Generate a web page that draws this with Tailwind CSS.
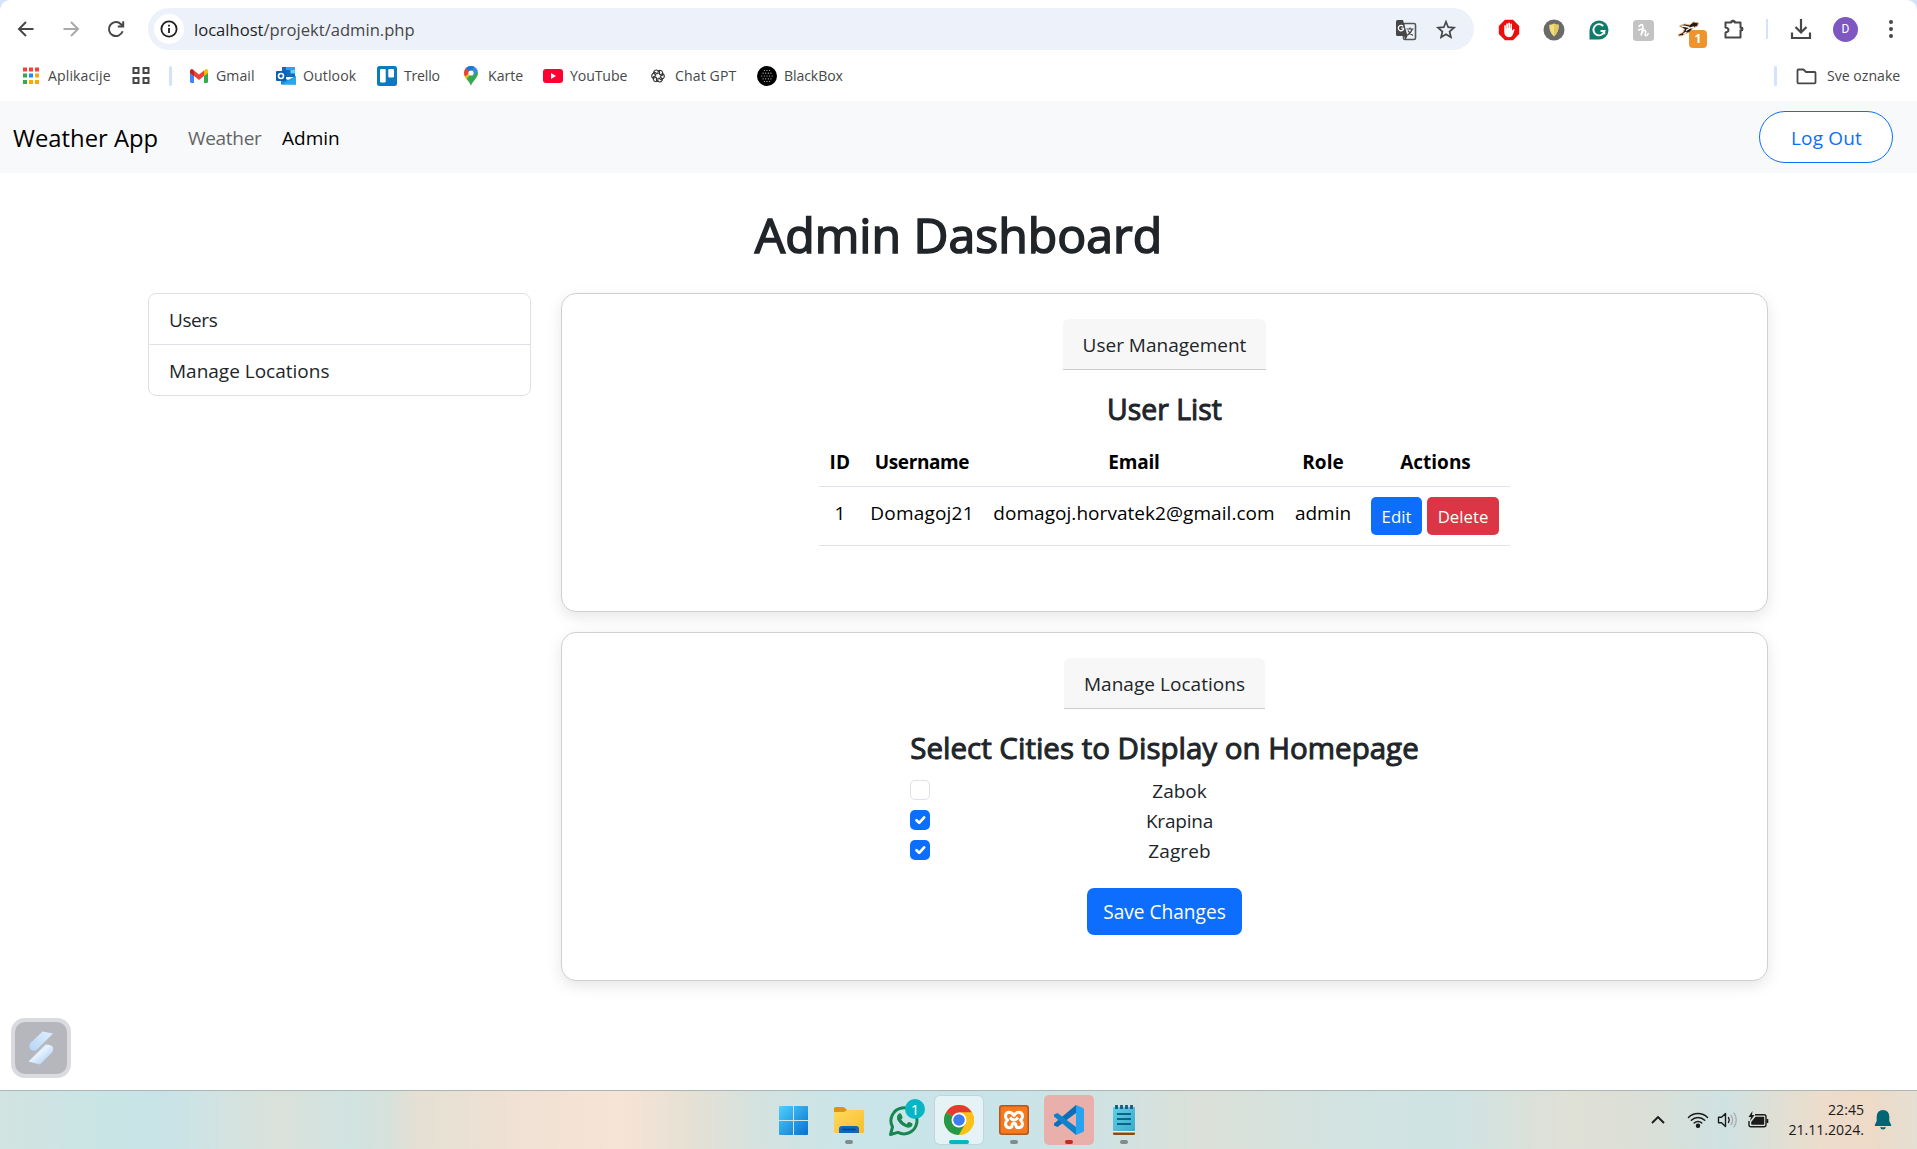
<!DOCTYPE html>
<html lang="hr">
<head>
<meta charset="utf-8">
<title>Admin Dashboard</title>
<script src="https://cdn.jsdelivr.net/npm/@tailwindcss/browser@4"></script>
</head>
<body class="w-[1917px] h-[1149px] overflow-hidden bg-[#d3e3fd] font-['Open_Sans',sans-serif] text-[#212529] flex flex-col">

<!-- Browser chrome -->
<header class="h-[101px] shrink-0 bg-white rounded-t-[10px] flex flex-col">
  <div class="h-[58px] flex items-center">
    <div class="w-[148px] pl-[3px] flex">
      <div class="w-[45px] flex justify-center"><svg class="w-5 h-5" viewBox="0 0 20 20" fill="none" stroke="#474747" stroke-width="2"><path d="M17.5 10H3.5M10 3L3 10l7 7"/></svg></div>
      <div class="w-[45px] flex justify-center"><svg class="w-5 h-5" viewBox="0 0 20 20" fill="none" stroke="#a9a9a9" stroke-width="2"><path d="M2.5 10h14M10 3l7 7-7 7"/></svg></div>
      <div class="w-[45px] flex justify-center"><svg class="w-5 h-5" viewBox="0 0 20 20" fill="none" stroke="#474747" stroke-width="2"><path d="M16.6 12.3A7 7 0 1 1 15 5.2l2 2.2M17.2 2.2v5.3h-5.4"/></svg></div>
    </div>
    <div class="w-[1326px] h-[42px] rounded-full bg-[#ecf1fa] flex items-center pl-[6px]">
      <div class="w-[30px] h-[30px] rounded-full bg-white flex items-center justify-center"><svg class="w-[18px] h-[18px]" viewBox="0 0 18 18" fill="none" stroke="#1f1f1f" stroke-width="1.8"><circle cx="9" cy="9" r="7.6"/><path d="M9 8v5M9 4.8v1.8"/></svg></div>
      <div class="ml-[10px] pt-px text-[16.6px] leading-[24px] text-[#1f1f1f] whitespace-nowrap">localhost<span class="text-[#474747]">/projekt/admin.php</span></div>
      <div class="ml-auto mr-[17px] flex items-center gap-[18px] pt-px">
        <svg class="w-[22px] h-[22px]" viewBox="0 0 22 22"><rect x="8.5" y="4.5" width="12" height="16" rx="1.5" fill="#ecf1fa" stroke="#575757" stroke-width="1.6"/><path d="M1 2.500Q1 1 2.500 1H8l4.500 16H2.500Q1 17 1 15.500z" fill="#474747"/><path d="M12.500 17l-2 4-1.500-4z" fill="#474747"/><path d="M8.800 9.200H6.300M8.700 9.400A2.700 2.700 0 1 1 8 7.200" fill="none" stroke="#fff" stroke-width="1.300"/><path d="M11.500 10h7M15 8.500V10M17.200 10q-1 4-5 6.300M13 11.500q1.500 3 5 5" fill="none" stroke="#474747" stroke-width="1.200"/></svg>
        <svg class="w-[22px] h-[22px]" viewBox="0 0 22 22" fill="none" stroke="#474747" stroke-width="1.700" stroke-linejoin="miter"><path d="M11 2.800l2.200 5.400 5.800.5-4.400 3.800 1.300 5.700L11 15.200l-4.900 3 1.300-5.700L3 8.700l5.800-.5z"/></svg>
      </div>
    </div>
    <div class="ml-3 flex items-center">
      <div class="w-[45px] flex justify-center pt-0.5"><svg class="w-[22px] h-[22px]" viewBox="0 0 22 22"><path d="M7 .8h8L21.200 7v8L15 21.200H7L.8 15V7z" fill="#ec0d0d"/><path d="M6.200 12.500V6.400q.8-.9 1.600 0V9.500h.4V4.700q.8-.9 1.700 0V9.300h.4V3.900q.8-.9 1.700 0v5.400h.4V5q.8-.9 1.600 0v6.800l1-1.400q1.200-.8 1.700.2L15 15.300q-1 2.900-4 2.900-4.800 0-4.800-5.700z" fill="#fff"/></svg></div>
      <div class="w-[45px] flex justify-center pt-0.5"><svg class="w-[22px] h-[22px]" viewBox="0 0 22 22"><circle cx="11" cy="11" r="10.500" fill="#6a6a6a"/><path d="M6.300 5.800q2.700 0 4.700-1.300 2 1.300 4.700 1.300.5 7.200-4.700 11.700Q5.800 13 6.300 5.800z" fill="#f1dd80"/><path d="M11 4.500q2 1.300 4.700 1.300.5 7.200-4.700 11.700z" fill="#e3c860"/></svg></div>
      <div class="w-[45px] flex justify-center pt-0.5"><svg class="w-5 h-5" viewBox="0 0 20 20"><path d="M10 .5A9.500 9.500 0 1 1 10 19.500H.5V10A9.500 9.500 0 0 1 10 .5z" fill="#0f7c6b"/><path d="M14.200 6A5.600 5.600 0 1 0 15.500 11H11.500M15.300 10.800v3.400" fill="none" stroke="#fff" stroke-width="1.900"/></svg></div>
      <div class="w-[45px] flex justify-center pt-0.5"><svg class="w-[21px] h-[21px]" viewBox="0 0 21 21"><rect width="21" height="21" rx="3.500" fill="#c3c3c3"/><path d="M6 6.500Q8 4 9.500 4.800 10.500 7 8 15.500q1.500-5 3.500-5.200 1.700 0 .9 2.700-.6 2.700.6 2.700 1.300 0 2.200-2M5.500 10l5-1.500" fill="none" stroke="#fff" stroke-width="1.600" stroke-linecap="round"/></svg></div>
      <div class="w-[45px] h-[44px] relative">
        <svg class="absolute left-[11px] top-[14px] w-[23px] h-[18px]" viewBox="0 0 23 18"><path d="M1.500 13.500L6 11.500l1.500-3.500L2.500 5l5-2 5 1 4-3 5 1-1 3-5 2-2 4-5 1.500-3 2-4 .5z" fill="#221a14" stroke="#eda862" stroke-width=".9"/><path d="M4.500 5l4 .5 4 1M9 9.500l4-2.500 4-1M6.500 13l3-2" stroke="#fff" stroke-width="1.300" fill="none"/></svg>
        <span class="absolute left-[23px] top-[23px] w-[18px] h-[18px] rounded-[4px] bg-[#ef942c] text-white text-[12px] leading-[18px] font-bold text-center">1</span>
      </div>
      <div class="w-[45px] flex justify-center"><svg class="w-[22px] h-[22px]" viewBox="0 0 22 22"><path d="M2.500 4.500h5.700v-1h3.600v1h5.700v5.200h1.600v2.600h-1.600v7.200h-15v-5q3-.4 3-2.500t-3-2.500z" fill="none" stroke="#474747" stroke-width="2" stroke-linejoin="round"/><path d="M8 4q0-2.500 2-2.500T12 4zM18 9q2.500 0 2.500 2T18 13z" fill="#474747"/></svg></div>
      <div class="w-[22px] flex justify-center"><div class="w-[2px] h-5 bg-[#d3e3fd]"></div></div>
      <div class="w-[45px] flex justify-center"><svg class="w-[22px] h-[22px]" viewBox="0 0 22 22" fill="none" stroke="#474747" stroke-width="2.200"><path d="M11 1v13M5.500 9l5.500 5.500L16.500 9M2 14.500V20h18v-5.500"/></svg></div>
      <div class="w-[45px] flex justify-center"><div class="w-[25px] h-[25px] rounded-full bg-[#7e57c2] text-white text-[12px] leading-[25px] text-center font-[Roboto]">D</div></div>
      <div class="w-[45px] flex justify-center"><svg class="w-1 h-[18px]" viewBox="0 0 4 18" fill="#474747"><circle cx="2" cy="2" r="2"/><circle cx="2" cy="9" r="2"/><circle cx="2" cy="16" r="2"/></svg></div>
    </div>
  </div>

  <nav class="h-[36px] flex items-center text-[14.1px] leading-[22px] text-[#474747] whitespace-nowrap">
    <div class="ml-[21px] w-[110px] flex items-center gap-[7px]"><svg class="w-5 h-5" viewBox="0 0 20 20"><path fill="#f44336" d="M2 1.500h4v4H2zM8 1.500h4v4H8zM14 1.500h4v4h-4z"/><path fill="#34a853" d="M2 7.500h4v4H2zM2 14h4v4H2z"/><path fill="#1a8cff" d="M8 7.500h4v4H8z"/><path fill="#fba904" d="M14 7.500h4v4h-4zM8 14h4v4H8zM14 14h4v4h-4z"/></svg><span class="tracking-[0.1px]">Aplikacije</span></div>
    <div class="w-[38px]"><svg class="w-5 h-5" viewBox="0 0 20 20" fill="none" stroke="#474747" stroke-width="2"><path d="M2.500 2h5v5h-5zM12.500 2h5v5h-5zM2.500 12h5v5h-5zM12.500 12h5v5h-5z"/></svg></div>
    <div class="w-[3px] h-5 rounded bg-[#d3e3fd]"></div>
    <div class="ml-[17px] w-[87px] flex items-center gap-[7px]"><svg class="w-5 h-5" viewBox="0 0 20 20"><path fill="#4285f4" d="M1 5v10.500Q1 17 2.500 17H5V8z"/><path fill="#34a853" d="M19 5v10.500q0 1.500-1.500 1.500H15V8z"/><path fill="#ea4335" d="M5 4.500l5 4 5-4V10l-5 4-5-4z"/><path fill="#c5221f" d="M1 5q0-2 2-2 1 0 2 1.500V10L1 7z"/><path fill="#fbbc04" d="M19 5q0-2-2-2-1 0-2 1.500V10l4-3z"/></svg><span class="tracking-[0.05px]">Gmail</span></div>
    <div class="w-[101px] flex items-center gap-[7px]"><svg class="w-5 h-5" viewBox="0 0 20 20"><path fill="#0f6cbd" d="M6 1h13v10H6z"/><path fill="#28a8ea" d="M10 1h9v3h-9z"/><path fill="#50d9ff" d="M14.500 4H19v3.500h-4.500z"/><path fill="#1490df" d="M5 10l7 4 8-4v8.500H5z"/><path fill="#28a8ea" d="M20 10L6 18.500h14z"/><rect y="5" width="10" height="10" rx="1" fill="#0a5fb5"/><circle cx="5" cy="10" r="2.500" fill="none" stroke="#fff" stroke-width="1.600"/></svg><span class="tracking-[0.1px]">Outlook</span></div>
    <div class="w-[84px] flex items-center gap-[7px]"><svg class="w-5 h-5" viewBox="0 0 20 20"><rect width="20" height="20" rx="2.500" fill="#0b7bbf"/><rect x="3" y="3" width="5.700" height="13.500" rx="1.300" fill="#fff"/><rect x="11.300" y="3" width="5.700" height="8.500" rx="1.300" fill="#fff"/></svg><span class="tracking-[-0.2px]">Trello</span></div>
    <div class="w-[82px] flex items-center gap-[7px]"><svg class="w-5 h-5" viewBox="0 0 20 20"><path fill="#34a853" d="M10 20C9 15.500 3 12 3 7a7 7 0 1 1 14 0c0 5-6 8.500-7 13z"/><path fill="#fbbc04" d="M4.500 11.700Q3 9.500 3 7l3 1 5-2-5.500 7z"/><path fill="#ea4335" d="M3 7q0-3 2-5l4 4-4.500 4.500Q3 9 3 7z"/><path fill="#1a73e8" d="M5 2q2-2 5-2 2 0 3.500 1L9 6z"/><path fill="#4285f4" d="M13 .7q2.700 1.300 3.600 4L11 11z"/><circle cx="10" cy="7" r="2.600" fill="#fff"/></svg><span>Karte</span></div>
    <div class="w-[105px] flex items-center gap-[7px]"><svg class="w-5 h-5" viewBox="0 0 20 20"><rect y="3" width="20" height="14" rx="3" fill="#ff0033"/><path d="M8 7l5 3-5 3z" fill="#fff"/></svg><span class="tracking-[-0.1px]">YouTube</span></div>
    <div class="w-[109px] flex items-center gap-[7px]"><svg class="w-5 h-5" viewBox="-3 -3 26 26" fill="none" stroke="#333" stroke-width="1.500"><g id="petal"><path d="M10 7.300V5.200q0-2.500 2.700-2.700 2.700.2 3.300 2.800v3.500l-3.500 2"/></g><use href="#petal" transform="rotate(60 10 10)"/><use href="#petal" transform="rotate(120 10 10)"/><use href="#petal" transform="rotate(180 10 10)"/><use href="#petal" transform="rotate(240 10 10)"/><use href="#petal" transform="rotate(300 10 10)"/></svg><span class="tracking-[0.1px]">Chat GPT</span></div>
    <div class="flex items-center gap-[7px]"><svg class="w-5 h-5" viewBox="0 0 20 20"><circle cx="10" cy="10" r="10" fill="#000"/><g stroke="#ccc" stroke-width="1.200" stroke-linecap="round" stroke-dasharray="0 2.600"><path d="M7.400 4.500h5.300M6.100 7.200h8M4.800 10h10.500M6.100 12.800h8M7.400 15.500h5.300"/></g></svg><span class="tracking-[-0.1px]">BlackBox</span></div>
    <div class="ml-auto w-[3px] h-5 rounded bg-[#d3e3fd]"></div>
    <div class="ml-[19px] w-[121px] flex items-center gap-[10px]"><svg class="w-[21px] h-[18px]" viewBox="0 0 21 18" fill="none" stroke="#474747" stroke-width="1.800" stroke-linejoin="round"><path d="M1.500 15.500v-12q0-1 1-1h5l2.500 2.500h8.500q1 0 1 1v9.500q0 .8-1 .8h-16q-1 0-1-.8z"/></svg><span>Sve oznake</span></div>
  </nav>
</header>

<!-- Page -->
<main class="grow bg-white flex flex-col relative">
  <nav class="h-[72px] bg-[#f8f9fb] flex items-center pl-[13px] pr-6 text-[19px] whitespace-nowrap">
    <div class="w-[175px] text-[23.800px] leading-[36px] text-black pt-px">Weather App</div>
    <div class="w-[94px] leading-[30px] pt-0.5 tracking-[-0.3px] text-[#646566]">Weather</div>
    <div class="leading-[30px] pt-0.5 text-black">Admin</div>
    <div class="ml-auto w-[134px] h-[52px] rounded-full border border-[#0d6efd] bg-white text-[#0d6efd] tracking-[0.2px] leading-[53px] pl-px text-center">Log Out</div>
  </nav>

  <h1 class="mt-[31px] mb-[29px] text-[48.200px] leading-[60px] text-center [-webkit-text-stroke:1.6px_#212529]">Admin Dashboard</h1>

  <div class="pl-[148px] flex items-start gap-[30px]">
    <div class="w-[383px] border border-[#dee2e6] rounded-[8px] text-[19px]">
      <div class="h-[51px] border-b border-[#dee2e6] pl-5 leading-[52px] tracking-[-0.4px]">Users</div>
      <div class="h-[50px] pl-5 leading-[53px]">Manage Locations</div>
    </div>

    <div class="w-[1207px] flex flex-col gap-5">
      <section class="h-[319px] border border-[#d0d0d0] rounded-[15px] bg-white shadow-[0_5px_15px_rgba(0,0,0,0.1)] pt-[25px] flex flex-col items-center text-[19px]">
        <div class="w-[203px] h-[51px] rounded-t-[6px] bg-[#f7f7f7] border-b border-[#cbcbcb] text-center leading-[52px] whitespace-nowrap">User Management</div>
        <h3 class="mt-[21px] mb-[9px] text-[28.400px] leading-[36px] [-webkit-text-stroke:1px_#212529]">User List</h3>
        <table class="w-[691px] table-fixed border-collapse text-center text-black whitespace-nowrap">
          <colgroup><col class="w-[42px]"><col class="w-[122px]"><col class="w-[302px]"><col class="w-[76px]"><col class="w-[149px]"></colgroup>
          <thead>
            <tr class="h-[50px] border-b border-[#dee2e6] font-bold">
              <th class="pt-[3px] tracking-[0.4px]">ID</th><th class="pt-[3px] tracking-[-0.4px]">Username</th><th class="pt-[3px] tracking-[-0.2px]">Email</th><th class="pt-[3px]">Role</th><th class="pt-[3px]">Actions</th>
            </tr>
          </thead>
          <tbody>
            <tr class="h-[59px] border-b border-[#dee2e6] align-top leading-[32px]">
              <td class="pt-[10px]">1</td>
              <td class="pt-[10px] tracking-[0.2px]">Domagoj21</td>
              <td class="pt-[10px] tracking-[0.05px]">domagoj.horvatek2@gmail.com</td>
              <td class="pt-[10px]">admin</td>
              <td class="pt-[10px] px-[10px]">
                <div class="flex gap-[5px] text-[16.800px] leading-[39px] text-white">
                  <span class="w-[51px] h-[38px] rounded-[5px] bg-[#0d6efd]">Edit</span>
                  <span class="w-[72px] h-[38px] rounded-[5px] bg-[#dc3545]">Delete</span>
                </div>
              </td>
            </tr>
          </tbody>
        </table>
      </section>

      <section class="h-[349px] border border-[#d0d0d0] rounded-[15px] bg-white shadow-[0_5px_15px_rgba(0,0,0,0.1)] pt-[25px] flex flex-col items-center text-[19px]">
        <div class="w-[201px] h-[51px] rounded-t-[6px] bg-[#f7f7f7] border-b border-[#cbcbcb] text-center leading-[52px] tracking-[0.04px] whitespace-nowrap">Manage Locations</div>
        <h3 class="mt-[21px] mb-[9px] text-[29.500px] leading-[36px] whitespace-nowrap [-webkit-text-stroke:1px_#212529]">Select Cities to Display on Homepage</h3>
        <div class="w-[509px] flex flex-col">
          <div class="h-[30px] flex items-center">
            <span class="w-5 h-5 rounded-[5px] border border-[#dee2e6] bg-white"></span>
            <span class="grow text-center pl-[10px] pt-0.5 leading-[32px]">Zabok</span>
          </div>
          <div class="h-[30px] flex items-center">
            <span class="w-5 h-5 rounded-[5px] bg-[#0d6efd]"><svg class="w-5 h-5" viewBox="0 0 20 20"><path fill="none" stroke="#fff" stroke-linecap="round" stroke-linejoin="round" stroke-width="2.700" d="M6.500 10.200l2.700 2.700 5-5.500"/></svg></span>
            <span class="grow text-center pl-[10px] pt-0.5 leading-[32px] tracking-[-0.2px]">Krapina</span>
          </div>
          <div class="h-[30px] flex items-center">
            <span class="w-5 h-5 rounded-[5px] bg-[#0d6efd]"><svg class="w-5 h-5" viewBox="0 0 20 20"><path fill="none" stroke="#fff" stroke-linecap="round" stroke-linejoin="round" stroke-width="2.700" d="M6.500 10.200l2.700 2.700 5-5.500"/></svg></span>
            <span class="grow text-center pl-[10px] pt-0.5 leading-[32px] tracking-[0.1px]">Zagreb</span>
          </div>
        </div>
        <div class="mt-[23px] w-[155px] h-[47px] rounded-[7px] bg-[#0d6efd] text-white text-[19.100px] leading-[49px] text-center whitespace-nowrap">Save Changes</div>
      </section>
    </div>
  </div>

  <!-- Floating assistant button, laid over the page corner -->
  <div class="absolute left-[11px] bottom-[12px] w-[60px] h-[60px] rounded-[14px] border-4 border-[#dadbdf] bg-[#b6b7bd] flex items-center justify-center">
    <svg class="w-[52px] h-[52px]" viewBox="0 0 52 52"><defs><linearGradient id="g1" x1="0" y1="1" x2="1" y2="0"><stop offset="0" stop-color="#b4d5f8"/><stop offset="1" stop-color="#e0effc"/></linearGradient><linearGradient id="g2" x1="0.200" y1="0.200" x2="0.800" y2="0.800"><stop offset="0" stop-color="#c0dcf8"/><stop offset=".4" stop-color="#e6f3fd"/><stop offset="1" stop-color="#b4d5f8"/></linearGradient></defs><path d="M27.500 9.500L38 11.500 21.500 28q-2.500 1.500-5 0-3.500-2.500-1.500-6.500z" fill="url(#g1)"/><path d="M30.500 22.500q3.500-.5 6.500 1.500 2.500 3 0 6.500L25 42.500l-11.500-3z" fill="url(#g2)"/></svg>
  </div>
</main>

<!-- Taskbar -->
<footer class="h-[59px] shrink-0 border-t border-[#a9b5b5] flex items-center bg-[linear-gradient(90deg,#d2e3e0_0px,#cae5e4_80px,#c8e3e7_165px,#d2e3e1_220px,#dae1da_280px,#d1e3e1_350px,#d6e1db_388px,#e4e0d3_415px,#f0e1d4_520px,#f6e4d6_620px,#e6e0d4_690px,#d4e2df_760px,#c9e5e9_850px,#c8e4e9_1000px,#d0e2e1_1110px,#dbe0d9_1200px,#d2e3e1_1350px,#cfe3e3_1450px,#dfe0d6_1560px,#dcdfd6_1640px,#cfe2e2_1725px,#dfdfd5_1775px,#eddccb_1825px,#eedac7_1870px,#e5dfd3_1917px)]">
  <div class="ml-[765px] flex h-full">
    <div class="w-[56px] pt-[15px] flex justify-center"><svg class="w-[29px] h-[29px]" viewBox="0 0 29 29"><defs><linearGradient id="w" x1="0" y1="0" x2="1" y2="1"><stop offset="0" stop-color="#4fd0fb"/><stop offset="1" stop-color="#0670cf"/></linearGradient></defs><path fill="url(#w)" d="M1 0h13v14H0V1Q0 0 1 0zM15 0h13q1 0 1 1v13H15zM0 15h14v14H1q-1 0-1-1zM15 15h14v13q0 1-1 1H15z"/></svg></div>
    <div class="w-[55px] pt-[15px] flex flex-col items-center"><svg class="w-[30px] h-[30px]" viewBox="0 0 30 30"><defs><linearGradient id="f" x1="0" y1="0" x2="1" y2="1"><stop offset="0" stop-color="#ffd95e"/><stop offset="1" stop-color="#f9bd2c"/></linearGradient></defs><path d="M0 10V2.500Q0 1 1.500 1H9q1.500 0 2.500 1.500L13 4v6z" fill="#d9980c"/><path d="M0 6h10l3-2h16q1 0 1 1v21q0 1-1 1H1q-1 0-1-1z" fill="url(#f)"/><path d="M5 27v-4q0-3 3-3h14q3 0 3 3v4z" fill="#0f68bd"/><path d="M8.500 23.500h13" stroke="#083e86" stroke-width="1.500"/></svg><i class="mt-1 w-2 h-1 rounded-full bg-[#828b8c]"></i></div>
    <div class="w-[55px] pt-[14px] relative flex justify-center"><svg class="w-[32px] h-[32px]" viewBox="0 0 32 32"><path d="M2.500 29.500l2-7.500a13 13 0 1 1 5.500 5.400z" fill="none" stroke="#18864f" stroke-width="3" stroke-linejoin="round"/><path d="M10.500 9q1.500-1.500 2.700 0l1.300 3q.3 1-1.300 2.500 2 3.500 5.300 4.700l1.700-2q1-.5 4 1.300 1 .7-.3 2.700-2.400 2.500-6.400.8-6.500-2.800-8.500-8-.5-3.500 1.500-5z" fill="#18864f"/></svg><span class="absolute left-[29px] top-[8px] w-5 h-5 rounded-full bg-[#06b6c4] text-white text-[15px] leading-[20px] text-center">1</span></div>
    <div class="w-[55px] pt-[5px] pl-[4px]"><div class="w-12 h-12 rounded-[5px] bg-[#e5f2f6] shadow-[0_0_0_1px_rgba(120,150,160,0.15)] pt-[9px] flex flex-col items-center"><svg class="w-[30px] h-[30px]" viewBox="0 0 30 30"><circle cx="15" cy="15" r="15" fill="#fbc116"/><path d="M15 15L2 7.500A15 15 0 0 1 28 7.500H15z" fill="#e33b2e"/><path d="M2 7.500A15 15 0 0 0 15 30l6.500-11.200L15 15z" fill="#279847"/><path d="M28 7.500A15 15 0 0 1 15 30l6.500-11.200L15 7.500z" fill="#fbc116"/><circle cx="15" cy="15" r="7.500" fill="#fff"/><circle cx="15" cy="15" r="5.800" fill="#3d7df0"/></svg><i class="mt-[5px] w-5 h-1 rounded-full bg-[#00b7c3]"></i></div></div>
    <div class="w-[55px] pt-[14px] flex flex-col items-center"><svg class="w-[30px] h-[30px]" viewBox="0 0 30 30"><rect width="30" height="30" rx="3" fill="#b9561b"/><rect x="1.500" y="1.500" width="27" height="27" rx="2.500" fill="#f47a20"/><path d="M15 10.500q-2-3.500-5-3.300-3.500.5-3.500 4 0 2.500 2 3.800-2 1.500-2 4.300.5 3.300 3.700 3.500 2.800 0 3-3 .3-1.500 1.800-1.500t1.800 1.500q.2 3 3 3 3.200-.2 3.700-3.500 0-2.800-2-4.300 2-1.300 2-3.800 0-3.500-3.500-4-3-.2-5 3.300zM11 12.500q2 2.500 4 2.500t4-2.500" fill="none" stroke="#fff" stroke-width="3" stroke-linejoin="round"/></svg><i class="mt-[5px] w-2 h-1 rounded-full bg-[#828b8c]"></i></div>
    <div class="w-[55px] pt-[4px] pl-[3px]"><div class="w-[50px] h-[50px] rounded-[5px] bg-[#e8afab] pt-[10px] flex flex-col items-center"><svg class="w-[30px] h-[30px]" viewBox="0 0 30 30"><path d="M22 0v8L3.500 22 0 20.500v-2z" fill="#0b6fb8"/><path d="M22 30v-8L3.500 8 0 9.500v2z" fill="#0e83cc"/><path d="M22 0l7 3q1 .5 1 1.500v21q0 1-1 1.500l-7 3z" fill="#27a3f1"/></svg><i class="mt-[5px] w-2 h-1 rounded-full bg-[#c42b1c]"></i></div></div>
    <div class="w-[55px] pt-[14px] flex flex-col items-center"><svg class="w-[22px] h-[30px]" viewBox="0 0 22 30"><defs><linearGradient id="n" x1="0" y1="0" x2="1" y2="1"><stop offset="0" stop-color="#5fd0e6"/><stop offset="1" stop-color="#3aa9cd"/></linearGradient></defs><rect y="2" width="22" height="25" rx="1" fill="url(#n)"/><path d="M0 27h22v1.500q0 1.500-1.500 1.500h-19Q0 30 0 28.500z" fill="#8a4a12"/><path d="M0 26h22v1.500H0z" fill="#f4f1ec"/><path d="M3.500 0v4M8.500 0v4M13.500 0v4M18.500 0v4" stroke="#0b5f7c" stroke-width="2.800"/><path d="M4 9h14M4 14h14M4 19h14" stroke="#0b6583" stroke-width="1.900"/></svg><i class="mt-[5px] w-2 h-1 rounded-full bg-[#828b8c]"></i></div>
  </div>
  <div class="ml-auto w-[267px] flex items-center text-[#1a1a1a]">
    <svg class="w-4 h-[10px]" viewBox="0 0 16 10" fill="none" stroke="#1a1a1a" stroke-width="1.900"><path d="M2 8l6-6 6 6"/></svg>
    <svg class="ml-[21px] w-[22px] h-[18px]" viewBox="0 0 22 18" fill="none" stroke="#1a1a1a" stroke-width="1.500" stroke-linecap="round"><path d="M1.500 6.500a13.500 13.500 0 0 1 19 0M4.300 9.300a9.500 9.500 0 0 1 13.400 0M7.200 12a5.500 5.500 0 0 1 7.600 0"/><circle cx="11" cy="14.800" r="1.500" fill="#1a1a1a"/></svg>
    <svg class="ml-[8px] w-[22px] h-[18px]" viewBox="0 0 22 18" fill="none" stroke="#1a1a1a" stroke-width="1.400" stroke-linejoin="round" stroke-linecap="round"><path d="M1.500 6.300h3l4-3.800v13l-4-3.800h-3zM11.500 6.500q1.500 2.500 0 5"/><path stroke="#a8b0b0" d="M14 4.300q3.300 4.700 0 9.400M17 2.200q4.500 6.800 0 13.600"/></svg>
    <svg class="ml-[8px] w-[22px] h-[18px]" viewBox="0 0 22 18"><path d="M8 3.800h9q2 0 2 2v8q0 2-2 2H4q-2 0-2-2V10" fill="none" stroke="#1a1a1a" stroke-width="1.400"/><path d="M8.500 5.800h8q.7 0 .7.700v6.500q0 .8-.7.800H5q-.8 0-.8-.8V11zM19.500 8h1.800v4h-1.800z" fill="#1a1a1a"/><path d="M5.500 0L1.500 6H4L3 10l4.500-6H5z" fill="#1a1a1a"/></svg>
    <div class="ml-[12px] w-[83px] text-right text-[14.100px] leading-[20px] whitespace-nowrap"><div>22:45</div><div>21.11.2024.</div></div>
    <svg class="ml-[10px] w-[18px] h-[20px]" viewBox="0 0 18 20" fill="#006672"><path d="M9 0q6 .3 6.300 6.500V11l1.900 4q.3 1-.8 1H1.600Q.5 16 .8 15l1.900-4V6.500Q3 .3 9 0zM6 17.200h6Q11.300 19.500 9 19.500T6 17.200z"/></svg>
  </div>
</footer>
</body>
</html>
